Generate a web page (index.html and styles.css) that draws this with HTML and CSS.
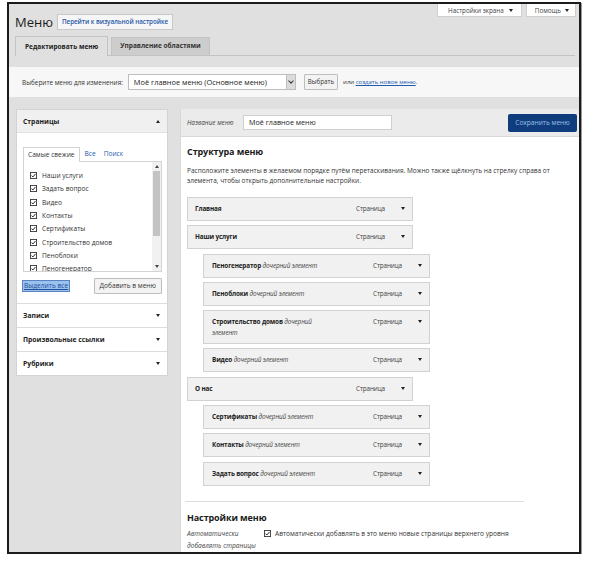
FILE: index.html
```html
<!DOCTYPE html>
<html lang="ru">
<head>
<meta charset="utf-8">
<title>Меню</title>
<link rel="stylesheet" href="styles.css">
</head>
<body>
<div class="frame">
  <div class="top">
    <div class="title-row">
      <h1 class="title">Меню</h1>
      <a class="btn-customize">Перейти к визуальной настройке</a>
    </div>
    <div class="screen-meta">
      <span class="meta-tab">Настройки экрана <i class="tri"></i></span>
      <span class="meta-tab small">Помощь <i class="tri"></i></span>
    </div>
  </div>

  <div class="tabs">
    <span class="tab active">Редактировать меню</span>
    <span class="tab">Управление областями</span>
  </div>

  <div class="manage">
    <span class="manage-label">Выберите меню для изменения:</span>
    <span class="select"><span class="select-text">Моё главное меню (Основное меню)</span><span class="select-arrow"><i class="chev"></i></span></span>
    <span class="btn">Выбрать</span>
    <span class="or">или <a class="link">создать новое меню</a>.</span>
  </div>

  <div class="columns">
    <div class="left">
      <div class="panel">
        <div class="acc-head first">Страницы <i class="tri up"></i></div>
        <div class="acc-body">
          <div class="ptabs">
            <span class="ptab active">Самые свежие</span>
            <span class="ptab">Все</span>
            <span class="ptab">Поиск</span>
          </div>
          <div class="list">
            <div class="list-items">
              <div class="li"><svg class="cb" viewBox="0 0 8 8"><rect x="0.5" y="0.5" width="7" height="7" fill="#fff" stroke="#333"/><path d="M1.7 4.1 L3.3 5.7 L6.3 2.2" fill="none" stroke="#222" stroke-width="1.1"/></svg>Наши услуги</div>
              <div class="li"><svg class="cb" viewBox="0 0 8 8"><rect x="0.5" y="0.5" width="7" height="7" fill="#fff" stroke="#333"/><path d="M1.7 4.1 L3.3 5.7 L6.3 2.2" fill="none" stroke="#222" stroke-width="1.1"/></svg>Задать вопрос</div>
              <div class="li"><svg class="cb" viewBox="0 0 8 8"><rect x="0.5" y="0.5" width="7" height="7" fill="#fff" stroke="#333"/><path d="M1.7 4.1 L3.3 5.7 L6.3 2.2" fill="none" stroke="#222" stroke-width="1.1"/></svg>Видео</div>
              <div class="li"><svg class="cb" viewBox="0 0 8 8"><rect x="0.5" y="0.5" width="7" height="7" fill="#fff" stroke="#333"/><path d="M1.7 4.1 L3.3 5.7 L6.3 2.2" fill="none" stroke="#222" stroke-width="1.1"/></svg>Контакты</div>
              <div class="li"><svg class="cb" viewBox="0 0 8 8"><rect x="0.5" y="0.5" width="7" height="7" fill="#fff" stroke="#333"/><path d="M1.7 4.1 L3.3 5.7 L6.3 2.2" fill="none" stroke="#222" stroke-width="1.1"/></svg>Сертификаты</div>
              <div class="li"><svg class="cb" viewBox="0 0 8 8"><rect x="0.5" y="0.5" width="7" height="7" fill="#fff" stroke="#333"/><path d="M1.7 4.1 L3.3 5.7 L6.3 2.2" fill="none" stroke="#222" stroke-width="1.1"/></svg>Строительство домов</div>
              <div class="li"><svg class="cb" viewBox="0 0 8 8"><rect x="0.5" y="0.5" width="7" height="7" fill="#fff" stroke="#333"/><path d="M1.7 4.1 L3.3 5.7 L6.3 2.2" fill="none" stroke="#222" stroke-width="1.1"/></svg>Пеноблоки</div>
              <div class="li"><svg class="cb" viewBox="0 0 8 8"><rect x="0.5" y="0.5" width="7" height="7" fill="#fff" stroke="#333"/><path d="M1.7 4.1 L3.3 5.7 L6.3 2.2" fill="none" stroke="#222" stroke-width="1.1"/></svg>Пеногенератор</div>
            </div>
            <div class="scrollbar">
              <i class="sb-up"></i>
              <span class="sb-track"><span class="sb-thumb"></span></span>
              <i class="sb-down"></i>
            </div>
          </div>
          <div class="list-actions">
            <a class="select-all">Выделить все</a>
            <span class="btn">Добавить в меню</span>
          </div>
        </div>
        <div class="acc-head">Записи <i class="tri"></i></div>
        <div class="acc-head">Произвольные ссылки <i class="tri"></i></div>
        <div class="acc-head">Рубрики <i class="tri"></i></div>
      </div>
    </div>

    <div class="right">
      <div class="rhead">
        <span class="name-label">Название меню</span>
        <span class="input">Моё главное меню</span>
        <span class="btn-primary">Сохранить меню</span>
      </div>
      <div class="rbody">
        <h2 class="h2">Структура меню</h2>
        <p class="desc">Расположите элементы в желаемом порядке путём перетаскивания. Можно также щёлкнуть на стрелку справа от элемента, чтобы открыть дополнительные настройки.</p>
        <ul class="menu">
          <li class="item"><span class="item-title"><b>Главная</b></span><span class="item-type">Страница</span><i class="tri"></i></li>
          <li class="item"><span class="item-title"><b>Наши услуги</b></span><span class="item-type">Страница</span><i class="tri"></i></li>
          <li class="item child"><span class="item-title"><b>Пеногенератор</b> <em>дочерний элемент</em></span><span class="item-type">Страница</span><i class="tri"></i></li>
          <li class="item child"><span class="item-title"><b>Пеноблоки</b> <em>дочерний элемент</em></span><span class="item-type">Страница</span><i class="tri"></i></li>
          <li class="item child"><span class="item-title"><b>Строительство домов</b> <em>дочерний элемент</em></span><span class="item-type">Страница</span><i class="tri"></i></li>
          <li class="item child"><span class="item-title"><b>Видео</b> <em>дочерний элемент</em></span><span class="item-type">Страница</span><i class="tri"></i></li>
          <li class="item"><span class="item-title"><b>О нас</b></span><span class="item-type">Страница</span><i class="tri"></i></li>
          <li class="item child"><span class="item-title"><b>Сертификаты</b> <em>дочерний элемент</em></span><span class="item-type">Страница</span><i class="tri"></i></li>
          <li class="item child"><span class="item-title"><b>Контакты</b> <em>дочерний элемент</em></span><span class="item-type">Страница</span><i class="tri"></i></li>
          <li class="item child"><span class="item-title"><b>Задать вопрос</b> <em>дочерний элемент</em></span><span class="item-type">Страница</span><i class="tri"></i></li>
        </ul>
        <div class="settings">
          <h3 class="h3">Настройки меню</h3>
          <div class="setting-row">
            <span class="setting-label">Автоматически добавлять страницы</span>
            <span class="setting-value"><svg class="cb" viewBox="0 0 8 8"><rect x="0.5" y="0.5" width="7" height="7" fill="#fff" stroke="#333"/><path d="M1.7 4.1 L3.3 5.7 L6.3 2.2" fill="none" stroke="#222" stroke-width="1.1"/></svg>Автоматически добавлять в это меню новые страницы верхнего уровня</span>
          </div>
        </div>
      </div>
    </div>
  </div>
</div>
</body>
</html>
```
FILE: styles.css
```css
* { box-sizing: border-box; margin: 0; padding: 0; }
body {
  margin: 0;
  background: #fff;
  font-family: "Open Sans", "Noto Sans", sans-serif;
  font-size: 7px;
  color: #222;
}
.frame {
  margin: 2px 0 0 7px;
  width: 574px;
  height: 552px;
  border: 2px solid #1b1b1b;
  box-shadow: 1px 1px 0 #9a9a9a;
  background: #e0e0e0;
  overflow: hidden;
  display: flex;
  flex-direction: column;
}
.tri {
  display: inline-block;
  width: 0; height: 0;
  border-left: 2.5px solid transparent;
  border-right: 2.5px solid transparent;
  border-top: 3.5px solid #222;
  vertical-align: middle;
}
.tri.up { border-top: 0; border-bottom: 3.5px solid #222; }

/* header */
.top { flex: none; display: flex; justify-content: space-between; align-items: flex-start; }
.title-row { display: flex; align-items: center; gap: 4px; padding: 10px 0 0 6px; }
.title { font-size: 13px; font-weight: 400; line-height: 16px; color: #1a1a1a; }
.btn-customize {
  height: 16px; line-height: 14px; padding: 0 4px;
  border: 1px solid #c8c8c8; background: #f6f6f6;
  color: #1f58a6; font-weight: 600; font-size: 6.3px; letter-spacing: -0.05px;
}
.screen-meta { display: flex; gap: 4px; padding-right: 3px; }
.meta-tab {
  display: flex; align-items: center; gap: 5px;
  height: 13px; padding: 0 8px 0 10px;
  background: #fff; border: 1px solid #cfcfcf; border-top: 0;
  font-size: 6.3px; color: #444;
}
.meta-tab.small { padding: 0 6px 0 8px; gap: 4px; }

/* tabs */
.tabs {
  flex: none;
  display: flex; align-items: flex-end; gap: 3px;
  margin: 6px 4px 0 6px; height: 20px;
  border-bottom: 1px solid #c3c3c3;
}
.tab {
  height: 18px; line-height: 16px; padding: 0 8px;
  border: 1px solid #c3c3c3; border-bottom: 0;
  background: #cdcdcd; font-weight: 700; font-size: 6.5px; color: #333;
}
.tab.active { background: #e0e0e0; height: 20px; margin-bottom: -1px; line-height: 19px; color: #222; padding: 0 9px; }

/* manage */
.manage {
  flex: none;
  margin-top: 11px; height: 30px;
  background: #f7f7f7;
  display: flex; align-items: center; padding-left: 13px;
  font-size: 6.4px; color: #333;
}
.manage-label { margin-right: 5px; }
.select {
  display: flex; width: 168px; height: 16px;
  border: 1px solid #bdbdbd; background: #fff;
}
.select-text { flex: 1; padding-left: 5px; line-height: 14px; font-size: 7.4px; color: #222; }
.select-arrow {
  width: 9px; background: #dcdcdc; border-left: 1px solid #bdbdbd;
  display: flex; align-items: center; justify-content: center;
}
.chev {
  width: 4px; height: 4px; border-right: 1px solid #333; border-bottom: 1px solid #333;
  transform: rotate(45deg); margin-top: -2px;
}
.btn {
  display: inline-block; height: 16px; line-height: 14px; padding: 0 5px;
  border: 1px solid #bdbdbd; background: #f3f3f3; color: #333; font-size: 6.6px;
  border-radius: 1px;
}
.manage .btn { margin-left: 8px; padding: 0 3px; font-size: 6.2px; }
.or { margin-left: 5px; font-size: 6px; }
.link { color: #1d5ab0; text-decoration: underline; }

/* columns */
.columns {
  flex: 1 1 auto; min-height: 0; overflow: hidden;
  display: flex; gap: 12px; margin-top: 12px; padding-left: 7px; align-items: stretch;
}
.left { width: 152px; flex: none; }
.panel { background: #fff; border: 1px solid #d3d3d3; }
.acc-head {
  display: flex; justify-content: space-between; align-items: center;
  height: 24px; padding: 0 7px 0 6px;
  border-top: 1px solid #dcdcdc;
  font-weight: 700; font-size: 6.8px; color: #222;
}
.acc-head.first { border-top: 0; height: 23px; background: #f0f0f0; border-bottom: 1px solid #e2e2e2; }
.acc-body { padding: 13px 5px 9px 6px; }
.ptabs { display: flex; align-items: flex-end; height: 15px; }
.ptab { padding: 0 4px; line-height: 14px; color: #1d5ab0; font-size: 6.6px; }
.ptab.active { color: #333; background: #fff; border: 1px solid #d3d3d3; border-bottom: 0; height: 15px; margin-bottom: -1px; position: relative; z-index: 1; margin-right: 1px; }
.list {
  display: flex; height: 111px;
  border: 1px solid #d3d3d3; background: #fff;
}
.list-items { flex: 1; overflow: hidden; padding: 7px 0 0 6px; }
.li { display: flex; align-items: center; gap: 5px; height: 13.3px; font-size: 6.6px; color: #333; }
.cb { width: 7px; height: 7px; flex: none; }
.scrollbar { width: 9px; display: flex; flex-direction: column; align-items: center; background: #f1f1f1; }
.sb-up, .sb-down {
  display: block; width: 0; height: 0; margin: 3px 0;
  border-left: 2px solid transparent; border-right: 2px solid transparent;
}
.sb-up { border-bottom: 3px solid #444; }
.sb-down { border-top: 3px solid #444; }
.sb-track { flex: 1; width: 100%; padding: 0 1px; }
.sb-thumb { display: block; height: 65px; background: #c3c3c3; }
.list-actions { display: flex; justify-content: space-between; align-items: center; margin-top: 6px; }
.select-all {
  color: #1d4f9a; text-decoration: underline; font-size: 6.6px;
  background: #9bc1ee; outline: 1px solid #5a84c0; padding: 0 1px; line-height: 10px;
}

/* right */
.right { flex: 1; min-width: 0; display: flex; flex-direction: column; background: #fff; border-left: 1px solid #d8d8d8; }
.rhead {
  flex: none;
  height: 28px; background: #ebebeb; border-bottom: 1px solid #d8d8d8;
  display: flex; align-items: center; padding: 0 2px 0 6px;
}
.name-label { font-style: italic; font-size: 6.4px; color: #444; width: 56px; }
.input {
  width: 149px; height: 15px; line-height: 13px; padding-left: 5px;
  border: 1px solid #cfcfcf; background: #fff; font-size: 7.2px; color: #222;
}
.btn-primary {
  margin-left: auto; width: 69px; height: 18px; line-height: 18px; text-align: center;
  background: #0e3c7c; color: #9fc0e8; font-size: 6.6px; border-radius: 2px;
}
.rbody { flex: none; padding: 8px 0 0 6px; }
.h2 { font-size: 9px; font-weight: 700; line-height: 14px; color: #1a1a1a; letter-spacing: -0.1px; }
.desc { margin-top: 7px; font-size: 6.5px; line-height: 10px; color: #333; width: 372px; }
.menu { list-style: none; margin-top: 11px; }
.item {
  display: flex; align-items: flex-start;
  width: 226px; min-height: 24px; margin-bottom: 4.3px;
  padding: 5px 7px 5px 7px; line-height: 11px;
  background: #f1f1f1; border: 1px solid #d2d2d2;
  font-size: 6.4px; letter-spacing: -0.15px;
}
.item.child { margin-left: 16px; width: 227px; padding-left: 8px; }
.item-title { width: 122px; color: #222; }
.item-title b { font-weight: 700; }
.item-title em { font-style: italic; color: #444; }
.item-type { margin-left: auto; margin-right: 16px; color: #444; }
.item .tri { margin-top: 4px; }
.settings { margin: 15px 0 0 -2px; width: 339px; border-top: 1px solid #dedede; }
.h3 { font-size: 9px; font-weight: 700; line-height: 14px; padding: 9px 0 0 2px; color: #1a1a1a; letter-spacing: -0.1px; }
.setting-row { display: flex; margin-top: 3px; padding-left: 2px; line-height: 12px; }
.setting-label { width: 77px; font-style: italic; font-size: 6.6px; color: #444; }
.setting-value { display: flex; align-items: center; gap: 4px; height: 12px; font-size: 6.6px; color: #333; }
```
